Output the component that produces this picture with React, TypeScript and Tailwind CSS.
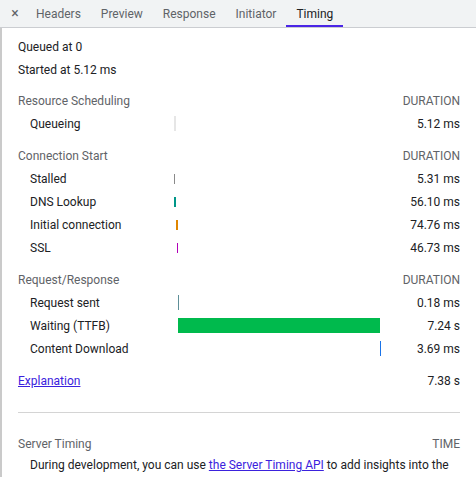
import React from 'react';

type Bar = { left: number; width: number; height: number; color: string };
type Row = { label: string; value: string; bar: Bar };
type Section = { title: string; rows: Row[]; gap: string };

const tabs = ['Headers', 'Preview', 'Response', 'Initiator', 'Timing'];

const sections: Section[] = [
  {
    title: 'Resource Scheduling',
    gap: 'mt-[8px]',
    rows: [{ label: 'Queueing', value: '5.12 ms', bar: { left: 0, width: 2, height: 15, color: '#e6e6e6' } }],
  },
  {
    title: 'Connection Start',
    gap: 'mt-[9px]',
    rows: [
      { label: 'Stalled', value: '5.31 ms', bar: { left: 0, width: 1, height: 10, color: '#8a8a8a' } },
      { label: 'DNS Lookup', value: '56.10 ms', bar: { left: 0, width: 2, height: 10, color: '#009688' } },
      { label: 'Initial connection', value: '74.76 ms', bar: { left: 2, width: 2, height: 10, color: '#e08600' } },
      { label: 'SSL', value: '46.73 ms', bar: { left: 3, width: 1, height: 10, color: '#b100b8' } },
    ],
  },
  {
    title: 'Request/Response',
    gap: 'mt-[9px]',
    rows: [
      { label: 'Request sent', value: '0.18 ms', bar: { left: 4, width: 1, height: 15, color: '#5e8f98' } },
      { label: 'Waiting (TTFB)', value: '7.24 s', bar: { left: 4, width: 202, height: 15, color: '#00ba4d' } },
      { label: 'Content Download', value: '3.69 ms', bar: { left: 206, width: 1, height: 15, color: '#1a73e8' } },
    ],
  },
];

function TimingRow({ row }: { row: Row }) {
  return (
    <div className="flex h-[23px] items-center">
      <div className="w-[156px] pl-[12px]">{row.label}</div>
      <div className="flex w-[207px] items-center">
        {/* bar offset/width come from the timing data */}
        <div style={{ marginLeft: row.bar.left, width: row.bar.width, height: row.bar.height, background: row.bar.color }} />
      </div>
      <div className="flex-1 text-right">{row.value}</div>
    </div>
  );
}

export default function App() {
  return (
    <div className="flex h-[477px] w-[476px] flex-col overflow-hidden bg-white text-[12px] text-[#202124] [font-family:Roboto,'Liberation_Sans',sans-serif]">
      {/* Tab strip */}
      <div className="flex h-[28px] shrink-0 items-stretch border-b border-[#cbcdd1] bg-[#f1f3f4]">
        <div className="flex w-[26px] items-center justify-center pl-[4px] text-[14px] text-[#5f6368]">×</div>
        {tabs.map((t) => (
          <div
            key={t}
            className={`relative flex items-center px-[10px] ${t === 'Timing' ? 'text-[#202124]' : 'text-[#5f6368]'}`}
          >
            {t}
            {t === 'Timing' && <div className="absolute inset-x-0 bottom-0 h-[2px] bg-[#4a25e6]" />}
          </div>
        ))}
      </div>

      {/* Body */}
      <div className="flex flex-1 border-l-2 border-[#cacaca]">
        <div className="flex-1 pl-[16px] pr-[16px] pt-[7px]">
          <div className="flex h-[23px] items-center">Queued at 0</div>
          <div className="flex h-[23px] items-center">Started at 5.12 ms</div>

          {sections.map((s) => (
            <div key={s.title} className={s.gap}>
              <div className="flex h-[23px] items-center justify-between text-[#5f6368]">
                <span>{s.title}</span>
                <span>DURATION</span>
              </div>
              {s.rows.map((r) => (
                <TimingRow key={r.label} row={r} />
              ))}
            </div>
          ))}

          <div className="mt-[9px] flex h-[23px] items-center justify-between">
            <a href="#" className="text-[#3b22dd] underline">Explanation</a>
            <span>7.38 s</span>
          </div>

          <div className="mt-[20px] border-t border-[#d4d4d4]" />

          <div className="mt-[20px] flex h-[22px] items-center justify-between text-[#5f6368]">
            <span>Server Timing</span>
            <span>TIME</span>
          </div>
          <p className="pl-[12px] leading-[20px]">
            During development, you can use{' '}
            <a href="#" className="text-[#3b22dd] underline">the Server Timing API</a> to add insights into the
            server-side timing of this request.
          </p>
        </div>
      </div>
    </div>
  );
}
